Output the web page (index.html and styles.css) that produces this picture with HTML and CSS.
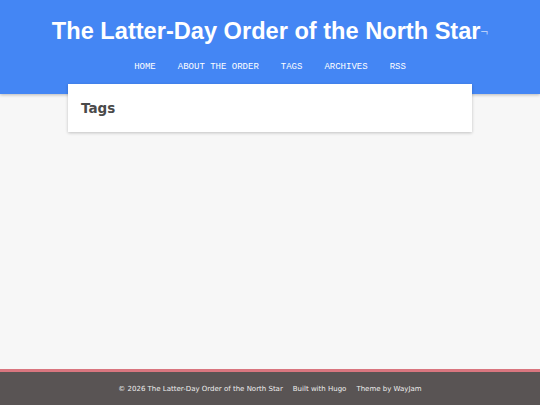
FILE: index.html
```html
<!DOCTYPE html>
<html>
<head>
<meta charset="utf-8">
<link rel="stylesheet" href="styles.css">
</head>
<body>
<div class="page">
  <header class="site-header">
    <h1 class="site-title">The Latter-Day Order of the North Star<span class="mark">¬</span></h1>
    <nav class="nav">
      <a href="#">HOME</a>
      <a href="#">ABOUT THE ORDER</a>
      <a href="#">TAGS</a>
      <a href="#">ARCHIVES</a>
      <a href="#">RSS</a>
    </nav>
  </header>
  <main class="main">
    <div class="card">
      <h2 class="card-title">Tags</h2>
    </div>
  </main>
  <footer class="footer">
    <span>© 2026 The Latter-Day Order of the North Star</span>
    <span>Built with Hugo</span>
    <span>Theme by WayJam</span>
  </footer>
</div>
</body>
</html>
```
FILE: styles.css
```css
html, body {
  margin: 0;
  padding: 0;
  height: 100%;
}
body {
  background: #f7f7f7;
}
.page {
  display: flex;
  flex-direction: column;
  min-height: 100vh;
}
.site-header {
  background: #4486f4;
  box-shadow: 0 1px 3px rgba(0,0,0,0.25);
  padding: 16px 0 21px;
  text-align: center;
}
.site-title {
  margin: 0;
  font-family: "Liberation Sans", Arial, sans-serif;
  font-weight: bold;
  font-size: 23.6px;
  line-height: 30px;
  color: #ffffff;
}
.mark {
  font-size: 13px;
  font-weight: normal;
  color: #b8cffa;
  vertical-align: 3px;
}
.nav {
  margin-top: 14px;
  display: flex;
  justify-content: center;
  gap: 22px;
  font-family: "Liberation Mono", "Courier New", monospace;
  font-size: 9px;
  line-height: 12px;
}
.nav a {
  color: #ffffff;
  text-decoration: none;
}
.main {
  flex: 1;
  position: relative;
  z-index: 1;
  margin-top: -10px;
}
.card {
  width: 404px;
  margin: 0 auto;
  background: #ffffff;
  box-shadow: 0 1px 3px rgba(0,0,0,0.22);
  height: 48px;
  display: flex;
  align-items: center;
  box-sizing: border-box;
  padding: 0 13px;
}
.card-title {
  margin: 0;
  font-family: "DejaVu Sans", Verdana, sans-serif;
  font-weight: bold;
  font-size: 13.5px;
  color: #4a4a4a;
}
.footer {
  border-top: 3px solid #d9767f;
  background: #595454;
  height: 33px;
  display: flex;
  justify-content: center;
  align-items: center;
  gap: 10px;
  font-family: "DejaVu Sans", Verdana, sans-serif;
  font-size: 7px;
  color: #eeeeee;
}
```
